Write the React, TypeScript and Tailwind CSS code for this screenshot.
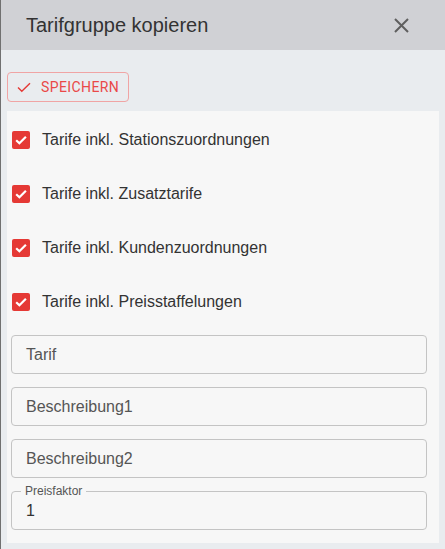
import { useState } from 'react';

const options = [
  'Tarife inkl. Stationszuordnungen',
  'Tarife inkl. Zusatztarife',
  'Tarife inkl. Kundenzuordnungen',
  'Tarife inkl. Preisstaffelungen',
];

function RedCheckbox({ checked, onChange }: { checked: boolean; onChange: () => void }) {
  return (
    <button
      type="button"
      onClick={onChange}
      className={
        checked
          ? 'w-[18px] h-[18px] rounded-[2px] bg-[#e53935] flex items-center justify-center shrink-0'
          : 'w-[18px] h-[18px] rounded-[2px] border-2 border-[#757575] shrink-0'
      }
    >
      {checked && (
        <svg width="18" height="18" viewBox="0 0 18 18">
          <path d="M4.2 9.2l3.2 3.1L13.9 5.8" fill="none" stroke="white" strokeWidth="2.2" />
        </svg>
      )}
    </button>
  );
}

function TextField({ label }: { label: string }) {
  return (
    <div className="h-[39px] w-[416px] border border-[#c4c4c4] rounded-[4px] flex items-center px-[14px] text-[16px] text-[#555]">
      {label}
    </div>
  );
}

export default function App() {
  const [checked, setChecked] = useState([true, true, true, true]);
  const [faktor] = useState('1');

  return (
    <div className="w-[445px] h-[549px] bg-[#e9ecef] border-l border-[#707070] font-['Liberation_Sans',Arial,sans-serif] text-[#333]">
      <div className="h-[50px] bg-[#d0d1d5] flex items-center justify-between pl-[25px] pr-[36px]">
        <span className="text-[20px] text-[#333]">Tarifgruppe kopieren</span>
        <svg width="15" height="15" viewBox="0 0 15 15" className="mt-[1px]">
          <path d="M1 1l13 13M14 1L1 14" stroke="#5f5f5f" strokeWidth="2" />
        </svg>
      </div>
      <div className="pl-[6px]">
        <button
          type="button"
          className="mt-[22px] h-[30px] w-[122px] border border-[#f0a4a4] rounded-[4px] flex items-center pl-[9px] gap-[10px] font-['Roboto',sans-serif] text-[14px] tracking-[0.4px] text-[#ea4848]"
        >
          <svg width="14" height="11" viewBox="0 0 14 11">
            <path d="M1 5.5l3.8 3.8L13 1.2" fill="none" stroke="#e53935" strokeWidth="1.4" />
          </svg>
          SPEICHERN
        </button>
        <div className="mt-[9px] w-[432px] h-[432px] bg-[#f7f7f7] pt-[2px] pl-[4px]">
          {options.map((o, i) => (
            <div key={o} className="h-[54px] flex items-center gap-[12px] pl-[1px]">
              <RedCheckbox
                checked={checked[i]}
                onChange={() => setChecked(checked.map((c, j) => (j === i ? !c : c)))}
              />
              <span className="text-[16px] text-[#333]">{o}</span>
            </div>
          ))}
          <div className="mt-[6px] flex flex-col gap-[13px]">
            <TextField label="Tarif" />
            <TextField label="Beschreibung1" />
            <TextField label="Beschreibung2" />
            <div className="relative h-[39px] w-[416px] border border-[#c4c4c4] rounded-[4px] flex items-center px-[14px] pt-[1px] text-[16px] text-[#333]">
              <span className="absolute left-[9px] top-[-8px] px-[4px] bg-[#f7f7f7] text-[12px] leading-[14px] text-[#555]">
                Preisfaktor
              </span>
              {faktor}
            </div>
          </div>
        </div>
      </div>
    </div>
  );
}
